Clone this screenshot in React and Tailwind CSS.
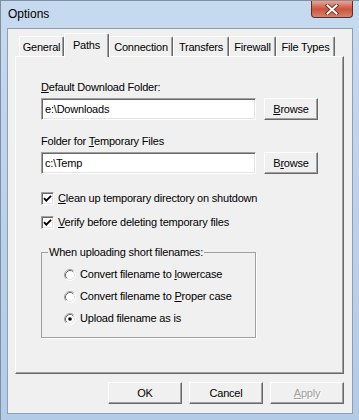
import React from "react";

const TABS = [
  { label: "General", w: "w-[45px]" },
  { label: "Paths", w: "w-[45px]", active: true },
  { label: "Connection", w: "w-[64px]" },
  { label: "Transfers", w: "w-[56px]" },
  { label: "Firewall", w: "w-[47px]" },
  { label: "File Types", w: "w-[59px]" },
];

const btn =
  "flex items-center justify-center h-[22px] bg-[#f0f0f0] border border-t-white border-l-white border-b-[#696969] border-r-[#696969] shadow-[inset_-1px_-1px_0_#a0a0a0]";

const field =
  "h-[22px] w-[215px] bg-white border border-t-[#a0a0a0] border-l-[#a0a0a0] border-b-white border-r-white shadow-[inset_1px_1px_0_#696969,inset_-1px_-1px_0_#e3e3e3] px-[3px] flex items-center";

const Checkbox = () => (
  <div className="w-[13px] h-[13px] bg-white border border-t-[#a0a0a0] border-l-[#a0a0a0] border-b-white border-r-white shadow-[inset_1px_1px_0_#696969,inset_-1px_-1px_0_#e3e3e3] flex items-center justify-center">
    <svg width="9" height="9" viewBox="0 0 9 9">
      <polyline points="1,4.2 3.3,6.6 8,1.8" fill="none" stroke="#000" strokeWidth="1.8" />
    </svg>
  </div>
);

const Radio = ({ on }) => (
  <svg width="12" height="12" viewBox="0 0 12 12" className="shrink-0">
    <circle cx="6" cy="6" r="5.5" fill="#fff" />
    <path d="M2.11 9.89 A5.5 5.5 0 0 1 9.89 2.11" fill="none" stroke="#a0a0a0" />
    <path d="M2.82 9.18 A4.5 4.5 0 0 1 9.18 2.82" fill="none" stroke="#696969" />
    <path d="M9.89 2.11 A5.5 5.5 0 0 1 2.11 9.89" fill="none" stroke="#ffffff" />
    <path d="M9.18 2.82 A4.5 4.5 0 0 1 2.82 9.18" fill="none" stroke="#e3e3e3" />
    {on && <circle cx="6" cy="6" r="1.8" fill="#000" />}
  </svg>
);

export default function App() {
  return (
    <div className="w-[359px] h-[420px] flex flex-col bg-gradient-to-b from-[#c6daef] via-[#bcd2ea] to-[#b3cbe6] border-l border-t border-[#7e8fa3] font-['Liberation_Sans',Arial,sans-serif] text-[11px] tracking-[-0.2px] text-black overflow-hidden">
      {/* title bar */}
      <div className="h-[27px] flex items-start shrink-0">
        <span className="pl-[7px] pt-[6px] text-[12px] tracking-normal leading-[15px]">Options</span>
        <div className="ml-auto mr-[6px] w-[42px] h-[17px] rounded-b-[4px] border border-t-0 border-[#6b2a1f] bg-gradient-to-b from-[#e9a594] via-[#c95440] to-[#d98064] flex items-center justify-center">
          <svg width="14" height="11" viewBox="0 0 14 11">
            <path d="M2.5 1.5 L11.5 9.5 M11.5 1.5 L2.5 9.5" stroke="#5a2a22" strokeWidth="3.6" strokeLinecap="square" />
            <path d="M2.5 1.5 L11.5 9.5 M11.5 1.5 L2.5 9.5" stroke="#fff" strokeWidth="2" strokeLinecap="square" />
          </svg>
        </div>
      </div>

      {/* client area */}
      <div className="flex-1 ml-[6px] mr-[6px] mb-[6px] bg-[#f0f0f0] border border-[#8d9fb5] flex flex-col px-[7px]">
        {/* tabs */}
        <div className="mt-[4px] h-[23px] flex items-end pl-[4px]">
          {TABS.map((t) =>
            t.active ? (
              <div
                key={t.label}
                className={`${t.w} relative z-10 -mb-px h-[24px] bg-[#f0f0f0] border-t border-l border-r border-t-white border-l-white border-r-[#696969] rounded-t-[2px] shadow-[inset_-1px_0_0_#a0a0a0] flex justify-center pt-[5px] leading-[13px]`}
              >
                {t.label}
              </div>
            ) : (
              <div
                key={t.label}
                className={`${t.w} h-[20px] bg-[#f0f0f0] border-t border-l border-r border-t-white border-l-white border-r-[#696969] rounded-t-[2px] shadow-[inset_-1px_0_0_#a0a0a0] flex justify-center pt-[4px] leading-[13px]`}
              >
                {t.label}
              </div>
            )
          )}
        </div>

        {/* panel */}
        <div className="h-[318px] w-[329px] bg-[#f0f0f0] border border-t-white border-l-white border-b-[#696969] border-r-[#696969] shadow-[inset_-1px_-1px_0_#a0a0a0] pl-[25px] flex flex-col leading-[13px]">
          <div className="mt-[24px]">
            <span className="underline">D</span>efault Download Folder:
          </div>
          <div className="mt-[4px] flex gap-[8px]">
            <div className={field}>e:\Downloads</div>
            <div className={`${btn} w-[54px]`}>
              <span>
                <span className="underline">B</span>rowse
              </span>
            </div>
          </div>

          <div className="mt-[15px]">
            Folder for <span className="underline">T</span>emporary Files
          </div>
          <div className="mt-[4px] flex gap-[8px]">
            <div className={field}>c:\Temp</div>
            <div className={`${btn} w-[54px]`}>
              <span>
                B<span className="underline">r</span>owse
              </span>
            </div>
          </div>

          <div className="mt-[18px] h-[13px] flex items-center gap-[4px]">
            <Checkbox />
            <span>
              <span className="underline">C</span>lean up temporary directory on shutdown
            </span>
          </div>
          <div className="mt-[11px] h-[13px] flex items-center gap-[4px]">
            <Checkbox />
            <span>
              <span className="underline">V</span>erify before deleting temporary files
            </span>
          </div>

          <fieldset className="mt-[17px] w-[215px] border border-[#a0a0a0] shadow-[1px_1px_0_#fff] pl-[6px] pb-[12px] flex flex-col">
            <legend className="px-[1px] bg-[#f0f0f0]">When uploading short filenames:</legend>
            <div className="mt-[9px] ml-[16px] h-[13px] flex items-center gap-[4px]">
              <Radio />
              <span>
                Convert filename to <span className="underline">l</span>owercase
              </span>
            </div>
            <div className="mt-[9px] ml-[16px] h-[13px] flex items-center gap-[4px]">
              <Radio />
              <span>
                Convert filename to <span className="underline">P</span>roper case
              </span>
            </div>
            <div className="mt-[9px] ml-[16px] h-[13px] flex items-center gap-[4px]">
              <Radio on />
              <span>Upload filename as is</span>
            </div>
          </fieldset>
        </div>

        {/* dialog buttons */}
        <div className="mt-[8px] w-[329px] flex justify-end gap-[7px]">
          <div className={`${btn} w-[74px] text-black`}>OK</div>
          <div className={`${btn} w-[74px] text-black`}>Cancel</div>
          <div className={`${btn} w-[74px] text-[#a0a0a0] [text-shadow:1px_1px_0_#fff]`}>
            <span>
              <span className="underline">A</span>pply
            </span>
          </div>
        </div>
      </div>
    </div>
  );
}
